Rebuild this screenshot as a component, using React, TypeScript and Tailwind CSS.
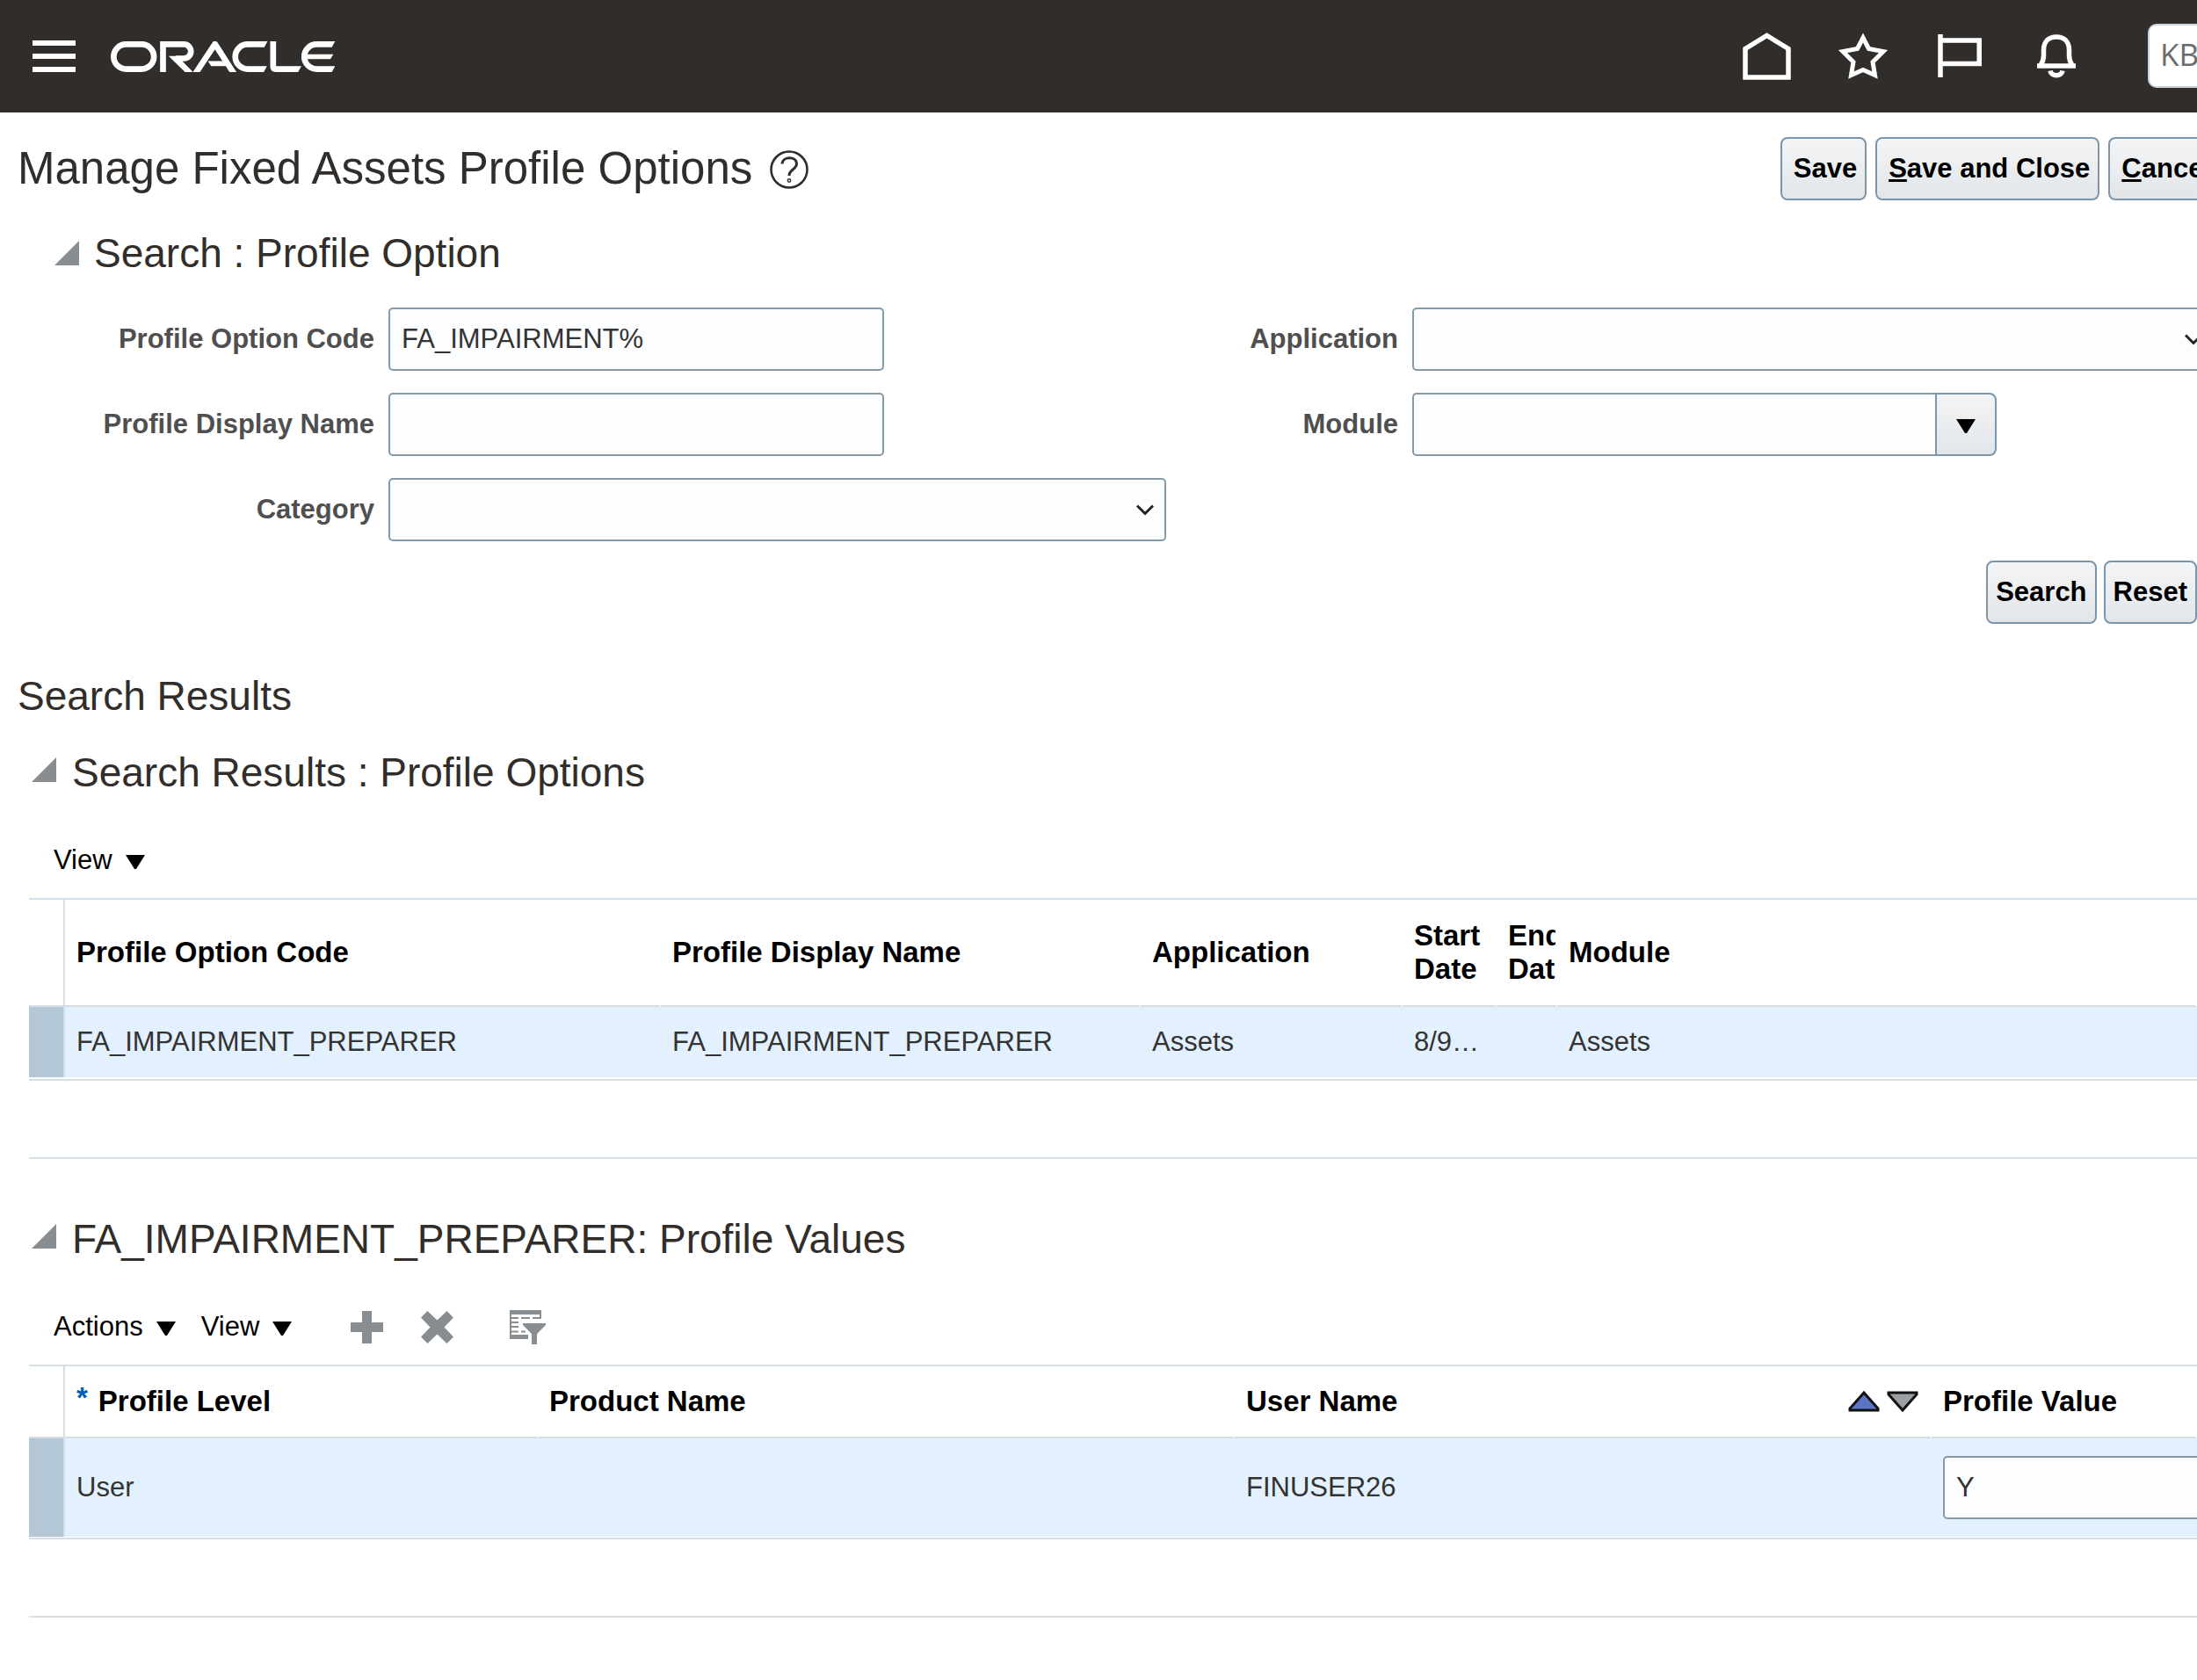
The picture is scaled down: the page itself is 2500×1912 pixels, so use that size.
import type { ReactNode } from 'react';
import cn from 'clsx';

const fieldStyle =
  'h-[72px] w-full rounded-[5px] border-2 border-[#8599a6] bg-[#fcfdfe] px-[13px] text-[31px] text-[#333] outline-none';

const buttonStyle =
  'h-[72px] shrink-0 rounded-lg border-2 border-[#7b95aa] bg-linear-to-b from-[#f3f4f5] to-[#e2e6e9] text-[31px] font-bold text-black';

function OracleLogo() {
  return (
    <svg viewBox="0 0 766 104" className="h-[35px] w-[256px]" role="img" aria-label="Oracle">
      <g transform="translate(-318 -53)" fill="none" stroke="#fff" strokeWidth="20">
        <rect x="328" y="63" width="137" height="84" rx="42" />
        <path d="M496 157V63H567a24 24 0 0 1 0 48H540" />
        <path d="M515 103H545L598 157H571Z" fill="#fff" stroke="none" />
        <path d="M606 163L673 62L738 163" strokeLinejoin="round" />
        <path d="M649 120H712L722 137H660Z" fill="#fff" stroke="none" />
        <path d="M838 63H784a42 42 0 0 0 0 84H836" />
        <path d="M836 53H852L841 73H836ZM834 137H850L839 157H834Z" fill="#fff" stroke="none" />
        <path d="M871 53V139q0 8 8 8H950" />
        <path d="M948 137H967L956 157H948Z" fill="#fff" stroke="none" />
        <path d="M1067 63H1019a42 42 0 0 0 0 84H1067" />
        <path d="M1066 53H1082L1071 73H1066ZM1066 137H1082L1071 157H1066Z" fill="#fff" stroke="none" />
        <path d="M980 97H1076L1066 113H980Z" fill="#fff" stroke="none" />
      </g>
    </svg>
  );
}

function HomeIcon() {
  return (
    <svg viewBox="0 0 55 54" className="h-[54px] w-[55px]" fill="none" stroke="#fff" strokeWidth="5.5">
      <path d="M3 51V18.500L27.500 3.500L52 18.500V51Z" />
    </svg>
  );
}

function StarIcon() {
  return (
    <svg viewBox="0 0 60 54" className="h-[54px] w-[60px]" fill="none" stroke="#fff" strokeWidth="5">
      <path d="M30 6L36.500 18.500L53 21.500L41 33.500L43.500 48.500L30 42.500L16.500 48.500L19 33.500L7 21.500L23.500 18.500Z" />
    </svg>
  );
}

function FlagIcon() {
  return (
    <svg viewBox="0 0 50 50" className="h-[50px] w-[50px]" fill="none" stroke="#fff" strokeWidth="5.500">
      <path d="M3 0V49M3 7H47.200V33.500H3" />
    </svg>
  );
}

function BellIcon() {
  return (
    <svg viewBox="0 0 44 50" className="h-[50px] w-[44px]" fill="none" stroke="#fff" strokeWidth="5.500">
      <path d="M4 35.500Q7.500 30 7.500 24V18C7.500 8 13.500 3 22 3S36.500 8 36.500 18V24Q36.500 30 40 35.500" />
      <path d="M0 36H44" />
      <path d="M15 41.500C16 48.500 28 48.500 29 41.500" />
    </svg>
  );
}

function DownArrow({ className }: { className?: string }) {
  return (
    <svg viewBox="0 0 24 18" className={cn('h-[18px] w-6', className)}>
      <path d="M1 1H23L13 17H11Z" fill="#000" />
    </svg>
  );
}

function Chevron({ className }: { className?: string }) {
  return (
    <svg
      viewBox="0 0 20 13"
      className={cn('pointer-events-none absolute top-[30px] h-[13px] w-5', className)}
      fill="none"
      stroke="#222"
      strokeWidth="3"
    >
      <path d="M1 1.500L10 10.500L19 1.500" />
    </svg>
  );
}

function DisclosureTriangle({ className }: { className?: string }) {
  return (
    <svg viewBox="0 0 28 28" className={cn('h-7 w-7 shrink-0', className)}>
      <path d="M28 0V28H0Z" fill="#878d91" />
    </svg>
  );
}

function ResultHeading({ children, className }: { children: ReactNode; className?: string }) {
  return (
    <h2 className={cn('flex items-center gap-[18px] pl-[3px] text-[46px] leading-[56px]', className)}>
      <DisclosureTriangle className="mb-1.5" />
      {children}
    </h2>
  );
}

function MenuButton({ label }: { label: string }) {
  return (
    <button type="button" className="flex items-center gap-3.5 text-[31px] leading-10 text-black">
      {label}
      <DownArrow className="mt-1" />
    </button>
  );
}

function Label({ id, children }: { id: string; children: ReactNode }) {
  return (
    <label htmlFor={id} className="text-right text-[31px] font-bold text-[#4f4f4f]">
      {children}
    </label>
  );
}

function Th({ children }: { children?: ReactNode }) {
  return (
    <th className="border-r-2 border-b-2 border-r-white border-b-[#d6dde4] pl-[13px] text-left text-[33px] leading-[38px] font-bold text-black">
      {children}
    </th>
  );
}

function Td({ children }: { children?: ReactNode }) {
  return <td className="pl-[13px] text-[31px] text-[#333]">{children}</td>;
}

const gutterHead = 'border-r-2 border-b-2 border-[#d3dee8]';
const gutterCell = 'border-r-2 border-[#d0dfea] bg-[#b4c7d7]';

export default function App() {
  return (
    <div className="min-h-screen overflow-hidden bg-white font-['Liberation_Sans',Arial,sans-serif] text-[#312d2a]">
      <header className="flex h-32 items-center bg-[#312d2a] pl-[37px]">
        <button type="button" aria-label="Navigator" className="flex flex-col gap-[9px]">
          <span className="h-1.5 w-[49px] bg-white" />
          <span className="h-1.5 w-[49px] bg-white" />
          <span className="h-1.5 w-[49px] bg-white" />
        </button>
        <a href="#home" className="ml-10">
          <OracleLogo />
        </a>
        <nav className="ml-auto flex items-center">
          <a href="#home" aria-label="Home" className="mr-[52px]">
            <HomeIcon />
          </a>
          <a href="#favorites" aria-label="Favorites" className="mr-[55px]">
            <StarIcon />
          </a>
          <a href="#watchlist" aria-label="Watchlist" className="mr-[63px]">
            <FlagIcon />
          </a>
          <a href="#notifications" aria-label="Notifications" className="mr-[82px]">
            <BellIcon />
          </a>
          <input
            type="text"
            aria-label="Search knowledge base"
            placeholder="KB"
            className="-mr-10 mb-0.5 h-[73px] w-24 rounded-[10px] border-2 border-[#c9d3dc] bg-white px-3 pb-1 font-['Open_Sans',sans-serif] text-[35px] placeholder-[#6b6b6b] outline-none"
          />
        </nav>
      </header>

      <main>
        <div className="mt-[27px] flex items-center pl-5">
          <h1 className="pt-px text-[51px] leading-[72px]">Manage Fixed Assets Profile Options</h1>
          <button type="button" aria-label="Help" className="ml-5 pt-0.5">
            <svg viewBox="0 0 44 44" className="h-11 w-11" fill="none" stroke="#312d2a">
              <circle cx="22" cy="22" r="20.500" strokeWidth="2.600" />
              <path
                d="M14 15.500C14.500 6.500 30.500 6.500 30.500 15.500C30.500 22 22 21.500 22 29"
                strokeWidth="3"
              />
              <circle cx="22" cy="34.500" r="1.700" strokeWidth="1.400" />
            </svg>
          </button>
          <div className="-mr-[27px] ml-auto flex gap-2.5">
            <button type="button" className={cn(buttonStyle, 'pt-0.5 pr-[9px] pl-[13px]')}>
              Save
            </button>
            <button type="button" className={cn(buttonStyle, 'pt-0.5 pr-[9px] pl-[13px]')}>
              <u>S</u>ave and Close
            </button>
            <button type="button" className={cn(buttonStyle, 'pt-0.5 pr-[9px] pl-[13px]')}>
              <u>C</u>ancel
            </button>
          </div>
        </div>

        <section>
          <h2 className="mt-8 flex items-center gap-[17px] pl-[62px] text-[46px] leading-[56px]">
            <DisclosureTriangle />
            Search : Profile Option
          </h2>
          <form className="mt-[34px]">
            <div className="flex items-start">
              <div className="grid grid-cols-[426px_885px] items-center gap-x-4 gap-y-[25px]">
                <Label id="code">Profile Option Code</Label>
                <input id="code" type="text" defaultValue="FA_IMPAIRMENT%" className={cn(fieldStyle, 'max-w-[564px]')} />
                <Label id="display-name">Profile Display Name</Label>
                <input id="display-name" type="text" className={cn(fieldStyle, 'max-w-[564px]')} />
                <Label id="category">Category</Label>
                <div className="relative">
                  <select id="category" className={cn(fieldStyle, 'appearance-none')} />
                  <Chevron className="right-[14px]" />
                </div>
              </div>
              <div className="-mr-5 grid flex-1 grid-cols-[264px_minmax(0,1fr)] items-center gap-x-4 gap-y-[25px]">
                <Label id="application">Application</Label>
                <div className="relative">
                  <select id="application" className={cn(fieldStyle, 'appearance-none')} />
                  <Chevron className="right-[14px]" />
                </div>
                <Label id="module">Module</Label>
                <div className="flex">
                  <input id="module" type="text" className={cn(fieldStyle, 'max-w-[595px] rounded-r-none border-r-0')} />
                  <button
                    type="button"
                    aria-label="Search module"
                    className={cn(buttonStyle, 'flex w-[70px] items-center justify-center rounded-l-none')}
                  >
                    <DownArrow className="mt-1" />
                  </button>
                </div>
              </div>
            </div>
            <div className="mt-[22px] flex justify-end gap-2">
              <button type="button" className={cn(buttonStyle, 'px-[9px]')}>
                Search
              </button>
              <button type="button" className={cn(buttonStyle, 'px-[9px]')}>
                Reset
              </button>
            </div>
          </form>
        </section>

        <h2 className="mt-[54px] pl-5 text-[46px] leading-[56px]">Search Results</h2>

        <section className="pl-[33px]">
          <ResultHeading className="mt-[31px]">Search Results : Profile Options</ResultHeading>
          <div className="mt-[52px] flex pl-7">
            <MenuButton label="View" />
          </div>
          <div className="mt-[23px] border-y-2 border-[#d6dfe6] pb-0.5">
            <table className="w-full table-fixed border-separate border-spacing-0">
              <colgroup>
                <col className="w-[41px]" />
                <col className="w-[678px]" />
                <col className="w-[546px]" />
                <col className="w-[298px]" />
                <col className="w-[107px]" />
                <col className="w-[69px]" />
                <col />
              </colgroup>
              <thead>
                <tr className="h-[122px]">
                  <td className={gutterHead} />
                  <Th>Profile Option Code</Th>
                  <Th>Profile Display Name</Th>
                  <Th>Application</Th>
                  <Th>Start Date</Th>
                  <Th>
                    <div className="overflow-hidden">
                      End
                      <br />
                      Date
                    </div>
                  </Th>
                  <Th>Module</Th>
                </tr>
              </thead>
              <tbody>
                <tr className="h-20 bg-[#e3f1ff]">
                  <td className={gutterCell} />
                  <Td>FA_IMPAIRMENT_PREPARER</Td>
                  <Td>FA_IMPAIRMENT_PREPARER</Td>
                  <Td>Assets</Td>
                  <Td>8/9…</Td>
                  <Td />
                  <Td>Assets</Td>
                </tr>
              </tbody>
            </table>
          </div>
          <hr className="mt-[87px] border-t-2 border-[#d6dfe6]" />
        </section>

        <section className="pl-[33px]">
          <ResultHeading className="mt-[63px]">FA_IMPAIRMENT_PREPARER: Profile Values</ResultHeading>
          <div className="mt-[52px] flex items-center pl-7">
            <MenuButton label="Actions" />
            <div className="ml-7">
              <MenuButton label="View" />
            </div>
            <button type="button" aria-label="Add" className="ml-[66px]">
              <svg viewBox="0 0 37 37" className="h-[37px] w-[37px]">
                <path d="M13 0H24V13H37V24H24V37H13V24H0V13H13Z" fill="#878d91" />
              </svg>
            </button>
            <button type="button" aria-label="Delete" className="ml-[43px]">
              <svg viewBox="0 0 37 37" className="h-[37px] w-[37px]">
                <path
                  d="M7.500 0L18.500 10.500L29.500 0L37 7.500L26.500 18.500L37 29.500L29.500 37L18.500 26.500L7.500 37L0 29.500L10.500 18.500L0 7.500Z"
                  fill="#878d91"
                />
              </svg>
            </button>
            <button type="button" aria-label="Query by example" className="ml-16">
              <svg viewBox="0 0 41 39" className="h-[39px] w-[41px]" fill="#878d91">
                <path d="M0 0H36V10H34V5H2V28H21V33H0Z" />
                <path d="M2 8H10V10H2ZM13 8H23V10H13ZM26 8H36V10H26ZM2 13H10V15H2ZM2 18H10V20H2ZM2 23.500H10V25.500H2ZM13 23.500H18V25.500H13Z" />
                <path d="M15 15H41V17L31 27V39H25V27L15 17Z" />
              </svg>
            </button>
          </div>
          <div className="mt-[23px] border-y-2 border-[#d6dfe6] pb-px">
            <table className="w-full table-fixed border-separate border-spacing-0">
              <colgroup>
                <col className="w-[41px]" />
                <col className="w-[538px]" />
                <col className="w-[793px]" />
                <col className="w-[793px]" />
                <col />
              </colgroup>
              <thead>
                <tr className="h-[82px]">
                  <td className={gutterHead} />
                  <Th>
                    <div className="flex items-start gap-3">
                      <span className="leading-[30px] text-[#005fb2]">*</span>
                      Profile Level
                    </div>
                  </Th>
                  <Th>Product Name</Th>
                  <Th>
                    <div className="flex items-center justify-between pr-3">
                      User Name
                      <span className="flex gap-1.5">
                        <button type="button" aria-label="Sort ascending">
                          <svg viewBox="0 0 38 26" className="h-[26px] w-[38px]">
                            <path d="M19 3L35 21V23H3V21Z" fill="#5975c4" stroke="#111" strokeWidth="3" />
                          </svg>
                        </button>
                        <button type="button" aria-label="Sort descending">
                          <svg viewBox="0 0 38 26" className="h-[26px] w-[38px]">
                            <path d="M3 3H35V5L19 23L3 5Z" fill="#9b9fa2" stroke="#111" strokeWidth="3" />
                          </svg>
                        </button>
                      </span>
                    </div>
                  </Th>
                  <Th>Profile Value</Th>
                </tr>
              </thead>
              <tbody>
                <tr className="h-28 bg-[#e3f1ff]">
                  <td className={gutterCell} />
                  <Td>User</Td>
                  <Td />
                  <Td>FINUSER26</Td>
                  <Td>
                    <div className="-mr-2">
                      <input type="text" aria-label="Profile Value" defaultValue="Y" className={fieldStyle} />
                    </div>
                  </Td>
                </tr>
              </tbody>
            </table>
          </div>
          <hr className="mt-[87px] border-t-2 border-[#d6dfe6]" />
        </section>
      </main>
    </div>
  );
}
